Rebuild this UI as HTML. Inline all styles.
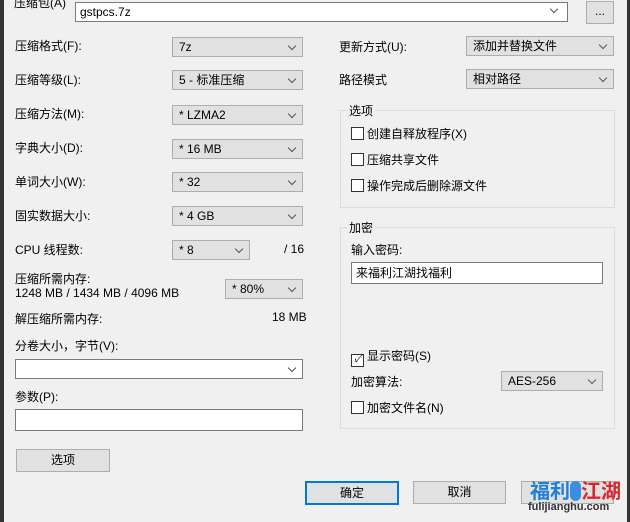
<!DOCTYPE html><html><head><meta charset="utf-8"><style>
body{margin:0;width:630px;height:522px;overflow:hidden;background:#333;font-family:"Liberation Sans","Noto Sans CJK SC",sans-serif;font-size:12px;color:#000;position:relative}
#d{position:absolute;left:4px;top:0;width:623px;height:522px;background:#f0f0f0}
.a{position:absolute;white-space:nowrap}
.l{margin-top:-3px}
.c{position:absolute;height:18px;background:#e1e1e1;border:1px solid #adadad;line-height:18px;padding-left:6px;box-sizing:content-box}
.c::after{content:"";position:absolute;right:7px;top:5px;width:5px;height:5px;border-right:1px solid #555;border-bottom:1px solid #555;transform:rotate(45deg)}
.w{background:#fff;border-color:#7a7a7a}
.t{position:absolute;background:#fff;border:1px solid #7a7a7a;height:20px;line-height:20px;padding-left:4px}
.b{position:absolute;background:#e1e1e1;border:1px solid #adadad;height:21px;line-height:21px;text-align:center}
.g{position:absolute;border:1px solid #dcdcdc}
.g span{position:absolute;left:6px;top:-9px;background:#f0f0f0;padding:0 2px}
.k{display:inline-block;width:11px;height:11px;border:1px solid #333;background:#fff;vertical-align:-2px;margin-right:3px}
</style></head><body><div id="d"></div>
<div class="a" style="left:14px;top:-6px">压缩包(A)</div>
<div class="t w" style="left:75px;top:2px;width:487px;height:18px;line-height:18px">gstpcs.7z</div>
<div class="a" style="left:551px;top:6px;width:5px;height:5px;border-right:1px solid #555;border-bottom:1px solid #555;transform:rotate(45deg)"></div>
<div class="b" style="left:586px;top:1px;width:26px;line-height:18px">...</div>
<div class="a l" style="left:15px;top:40px">压缩格式(F):</div><div class="c" style="left:172px;top:37px;width:123px">7z</div>
<div class="a l" style="left:15px;top:74px">压缩等级(L):</div><div class="c" style="left:172px;top:70px;width:123px">5 - 标准压缩</div>
<div class="a l" style="left:15px;top:108px">压缩方法(M):</div><div class="c" style="left:172px;top:105px;width:123px">* LZMA2</div>
<div class="a l" style="left:15px;top:142px">字典大小(D):</div><div class="c" style="left:172px;top:139px;width:123px">* 16 MB</div>
<div class="a l" style="left:15px;top:176px">单词大小(W):</div><div class="c" style="left:172px;top:172px;width:123px">* 32</div>
<div class="a l" style="left:15px;top:210px">固实数据大小:</div><div class="c" style="left:172px;top:206px;width:123px">* 4 GB</div>
<div class="a l" style="left:15px;top:244px">CPU 线程数:</div><div class="c" style="left:172px;top:240px;width:70px">* 8</div><div class="a" style="left:284px;top:242px">/ 16</div>
<div class="a l" style="left:15px;top:273px">压缩所需内存:</div><div class="a l" style="left:15px;top:289px">1248 MB / 1434 MB / 4096 MB</div>
<div class="c" style="left:225px;top:279px;width:70px">* 80%</div>
<div class="a l" style="left:15px;top:313px">解压缩所需内存:</div><div class="a l" style="left:272px;top:313px">18 MB</div>
<div class="a l" style="left:15px;top:340px">分卷大小，字节(V):</div><div class="c w" style="left:15px;top:359px;width:280px"></div>
<div class="a l" style="left:15px;top:391px">参数(P):</div><div class="t" style="left:15px;top:409px;width:282px"></div>
<div class="b" style="left:16px;top:449px;width:92px">选项</div>
<div class="a l" style="left:339px;top:41px">更新方式(U):</div><div class="c" style="left:466px;top:36px;width:140px">添加并替换文件</div>
<div class="a l" style="left:339px;top:74px">路径模式</div><div class="c" style="left:466px;top:69px;width:140px">相对路径</div>
<div class="g" style="left:340px;top:110px;width:273px;height:96px"><span>选项</span></div>
<div class="a l" style="left:351px;top:128px"><i class="k"></i>创建自释放程序(X)</div>
<div class="a l" style="left:351px;top:154px"><i class="k"></i>压缩共享文件</div>
<div class="a l" style="left:351px;top:180px"><i class="k"></i>操作完成后删除源文件</div>
<div class="g" style="left:340px;top:227px;width:273px;height:200px"><span>加密</span></div>
<div class="a l" style="left:351px;top:244px">输入密码:</div>
<div class="t" style="left:351px;top:262px;width:246px">来福利江湖找福利</div>
<div class="a l" style="left:351px;top:350px"><i class="k" style="text-align:center;line-height:10px;font-size:10px">✓</i>显示密码(S)</div>
<div class="a l" style="left:351px;top:376px">加密算法:</div><div class="c" style="left:501px;top:371px;width:94px">AES-256</div>
<div class="a l" style="left:351px;top:402px"><i class="k"></i>加密文件名(N)</div>
<div class="b" style="left:305px;top:481px;width:90px;border:2px solid #0078d7;height:20px;line-height:20px">确定</div>
<div class="b" style="left:413px;top:481px;width:91px">取消</div>
<div class="b" style="left:521px;top:481px;width:91px"></div>
<div class="a" style="left:530px;top:475px;font-weight:bold;font-size:20px;color:#1e7fd6">福利<span style="display:inline-block;width:11px;height:20px;border-radius:6px;background:#3b8ee0;vertical-align:-3px"></span><span style="color:#d9272e">江湖</span></div>
<div class="a" style="left:528px;top:501px;font-weight:bold;font-size:11px;color:#333">fulijianghu.com</div>
</body></html>
